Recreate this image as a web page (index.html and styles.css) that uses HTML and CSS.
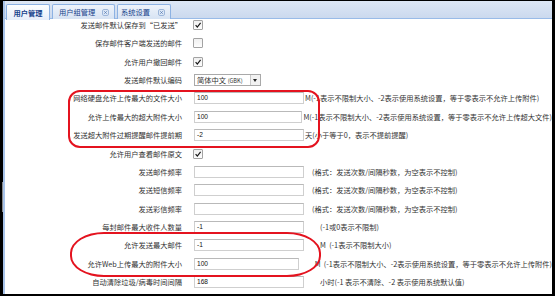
FILE: index.html
```html
<!DOCTYPE html>
<html lang="zh-cn">

<head>
    <meta charset="UTF-8">
    <title>用户管理</title>
    <link rel="stylesheet" href="styles.css">
</head>

<body>
    <div class="panel">
        <div class="tabbar">
            <div class="tab active tab-users">用户管理</div>
            <div class="tab tab-groups">用户组管理
                <svg class="close" width="7" height="7" viewBox="0 0 7 7"><rect x="0.5" y="0.5" width="6" height="6" rx="1.5" fill="#dce7f6" stroke="#9db6da"/><path d="M2.3 2.3 L4.7 4.7 M4.7 2.3 L2.3 4.7" stroke="#5b7fb5" stroke-width="0.9"/></svg>
            </div>
            <div class="tab tab-system">系统设置
                <svg class="close" width="7" height="7" viewBox="0 0 7 7"><rect x="0.5" y="0.5" width="6" height="6" rx="1.5" fill="#dce7f6" stroke="#9db6da"/><path d="M2.3 2.3 L4.7 4.7 M4.7 2.3 L2.3 4.7" stroke="#5b7fb5" stroke-width="0.9"/></svg>
            </div>
        </div>

        <div class="form">
            <div class="row">
                <label>发送邮件默认保存到“已发送”</label>
                <span class="check on"><svg width="10" height="10" viewBox="0 0 10 10"><path d="M2.6 5.2 L4.3 7 L7.6 2.8" fill="none" stroke="#1a1a1a" stroke-width="1.2"/></svg></span>
            </div>
            <div class="row">
                <label>保存邮件客户端发送的邮件</label>
                <span class="check"></span>
            </div>
            <div class="row">
                <label>允许用户撤回邮件</label>
                <span class="check on"><svg width="10" height="10" viewBox="0 0 10 10"><path d="M2.6 5.2 L4.3 7 L7.6 2.8" fill="none" stroke="#1a1a1a" stroke-width="1.2"/></svg></span>
            </div>
            <div class="row">
                <label>发送邮件默认编码</label>
                <span class="select">简体中文 <small>(GBK)</small><span class="arrow"></span></span>
            </div>
            <div class="row">
                <label>网络硬盘允许上传最大的文件大小</label>
                <span class="input">100</span>
                <span class="note">M(-1表示不限制大小、-2表示使用系统设置，等于零表示不允许上传附件)</span>
            </div>
            <div class="row">
                <label>允许上传最大的超大附件大小</label>
                <span class="input">100</span>
                <span class="note">M(-1表示不限制大小、-2表示使用系统设置，等于零表示不允许上传超大文件)</span>
            </div>
            <div class="row">
                <label>发送超大附件过期提醒邮件提前期</label>
                <span class="input">-2</span>
                <span class="note">天(小于等于0，表示不提前提醒)</span>
            </div>
            <div class="row">
                <label>允许用户查看邮件原文</label>
                <span class="check on"><svg width="10" height="10" viewBox="0 0 10 10"><path d="M2.6 5.2 L4.3 7 L7.6 2.8" fill="none" stroke="#1a1a1a" stroke-width="1.2"/></svg></span>
            </div>
            <div class="row">
                <label>发送邮件频率</label>
                <span class="input"></span>
                <span class="note mid">(格式：发送次数/间隔秒数，为空表示不控制)</span>
            </div>
            <div class="row">
                <label>发送短信频率</label>
                <span class="input"></span>
                <span class="note mid">(格式：发送次数/间隔秒数，为空表示不控制)</span>
            </div>
            <div class="row">
                <label>发送彩信频率</label>
                <span class="input"></span>
                <span class="note mid">(格式：发送次数/间隔秒数，为空表示不控制)</span>
            </div>
            <div class="row">
                <label>每封邮件最大收件人数量</label>
                <span class="input">-1</span>
                <span class="note far">(-1或0表示不限制)</span>
            </div>
            <div class="row">
                <label>允许发送最大邮件</label>
                <span class="input">-1</span>
                <span class="note far">M&nbsp;&nbsp;(-1表示不限制大小)</span>
            </div>
            <div class="row">
                <label>允许Web上传最大的附件大小</label>
                <span class="input">100</span>
                <span class="note far">M&nbsp;&nbsp;(-1表示不限制大小、-2表示使用系统设置，等于零表示不允许上传附件)</span>
            </div>
            <div class="row">
                <label>自动清除垃圾/病毒时间间隔</label>
                <span class="input">168</span>
                <span class="note far">小时(-1 表示不清除、-2 表示使用系统默认值)</span>
            </div>
        </div>
    </div>

    <!-- red annotations drawn over the form -->
    <div class="mark mark-top"></div>
    <div class="mark mark-bottom"></div>
    <div class="scroll-tick"></div>
</body>

</html>
```

FILE: styles.css
```css
body {
    margin: 0;
    padding: 1px 3px 2px 3px;
    height: 293px;
    background: #000;
    font-family: "Noto Sans CJK SC", "Liberation Sans", sans-serif;
    font-size: 7.25px;
    color: #333;
    overflow: hidden;
}

.panel {
    height: 100%;
    background: #fff;
    border-left: 2px solid #a9c4ea;
    box-sizing: border-box;
}

/* tab strip */
.tabbar {
    display: flex;
    gap: 2px;
    height: 18px;
    padding: 3px 0 0 1px;
    box-sizing: border-box;
    background: linear-gradient(#dde7f5, #cbd9ee);
    border-bottom: 1px solid #99bbe8;
}

.tab {
    display: flex;
    align-items: center;
    justify-content: space-between;
    height: 15px;
    padding: 0 5px 0 6px;
    box-sizing: border-box;
    border: 1px solid #8db2e3;
    border-bottom: none;
    border-radius: 2px 2px 0 0;
    background: linear-gradient(#eef3fb, #d7e3f3);
    color: #15428b;
    line-height: 12px;
}

.tab.active {
    justify-content: center;
    height: 16px;
    padding: 0;
    background: linear-gradient(#fdfeff, #e6eefa);
    font-weight: bold;
}

.tab-users {
    width: 44px;
}

.tab-groups {
    width: 63px;
}

.tab-system {
    width: 54px;
    padding-left: 3px;
}

.close {
    display: block;
}

/* form rows */
.row {
    display: flex;
    align-items: flex-start;
    height: 18.36px;
    white-space: nowrap;
}

.row label {
    width: 177px;
    flex-shrink: 0;
    text-align: right;
    line-height: 12px;
}

.check {
    width: 10px;
    height: 10px;
    margin: 1px 0 0 11px;
    box-sizing: border-box;
    border: 1px solid #a3a3a3;
    border-radius: 1px;
    background: linear-gradient(#f0f0f0, #fdfdfd);
}

.check svg {
    display: block;
    margin: -1px;
}

.select {
    position: relative;
    width: 67px;
    height: 12px;
    margin-left: 12px;
    padding-left: 2px;
    box-sizing: border-box;
    border: 1px solid #a9a9a9;
    line-height: 10px;
}

.select small {
    font-size: 5.6px;
}

.arrow {
    position: absolute;
    right: 0;
    top: 0;
    width: 9px;
    height: 10px;
    border-left: 1px solid #c8c8c8;
    background: #f2f2f2;
}

.arrow::after {
    content: "";
    position: absolute;
    left: 2px;
    top: 4px;
    border: 2.5px solid transparent;
    border-top: 3px solid #222;
    border-bottom: none;
}

.input {
    width: 110px;
    height: 12px;
    margin-left: 12px;
    padding-left: 2px;
    box-sizing: border-box;
    border: 1px solid #cfcfcf;
    border-top-color: #b9b9b9;
    font-family: "Liberation Sans", sans-serif;
    font-size: 6.6px;
    line-height: 10px;
    color: #111;
}

.note {
    margin-left: 1px;
    line-height: 12px;
}

.note.mid {
    margin-left: 8px;
}

.note.far {
    margin-left: 16px;
}

/* annotations */
.mark {
    position: absolute;
    border: 2px solid #e4131f;
    box-sizing: border-box;
}

.mark-top {
    left: 68px;
    top: 90px;
    width: 252px;
    height: 58px;
    border-radius: 12px;
}

.mark-bottom {
    left: 70px;
    top: 232px;
    width: 251px;
    height: 45px;
    border-radius: 34px / 21px;
}

.scroll-tick {
    position: absolute;
    left: 2px;
    top: 182px;
    width: 1px;
    height: 30px;
    background: #8a8a8a;
}
```
